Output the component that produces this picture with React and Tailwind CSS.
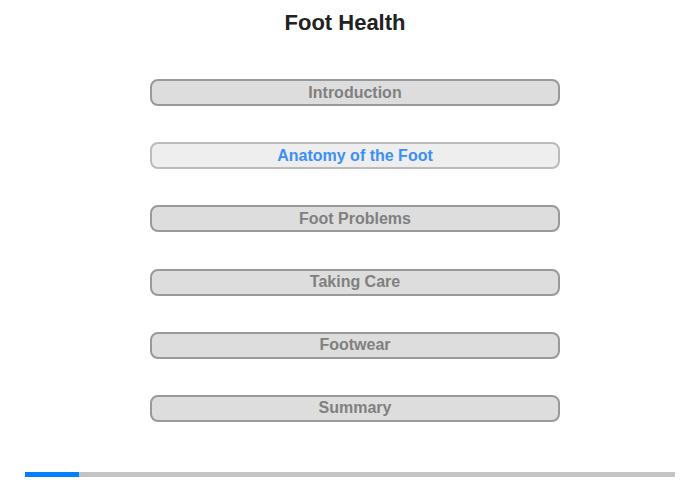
import React from 'react';

const sections = [
  { label: 'Introduction' },
  { label: 'Anatomy of the Foot', active: true },
  { label: 'Foot Problems' },
  { label: 'Taking Care' },
  { label: 'Footwear' },
  { label: 'Summary' },
];

const App = () => (
  <div className="w-[700px] h-[480px] bg-white font-['Liberation_Sans',Arial,sans-serif] flex flex-col">
    <h1 className="mt-[10px] pr-[10px] text-center text-[22px] leading-[26px] font-bold text-[#222]">Foot Health</h1>
    <div className="mt-[43px] pl-[10px] flex flex-col items-center gap-[36.2px]">
      {sections.map((s) => (
        <button
          key={s.label}
          className={
            s.active
              ? 'w-[410px] h-[27px] rounded-[8px] border-2 border-[#bbbbbb] bg-[#eeeeee] text-[#3c8ff7] text-[16px] font-bold leading-none'
              : 'w-[410px] h-[27px] rounded-[8px] border-2 border-[#999999] bg-[#dddddd] text-[#808080] text-[16px] font-bold leading-none'
          }
        >
          {s.label}
        </button>
      ))}
    </div>
    <div className="mt-auto mb-[3px] mx-[25px] h-[5px] bg-[#c4c4c4] flex">
      <div className="w-[54px] h-full bg-[#0080ff]" />
    </div>
  </div>
);

export default App;
